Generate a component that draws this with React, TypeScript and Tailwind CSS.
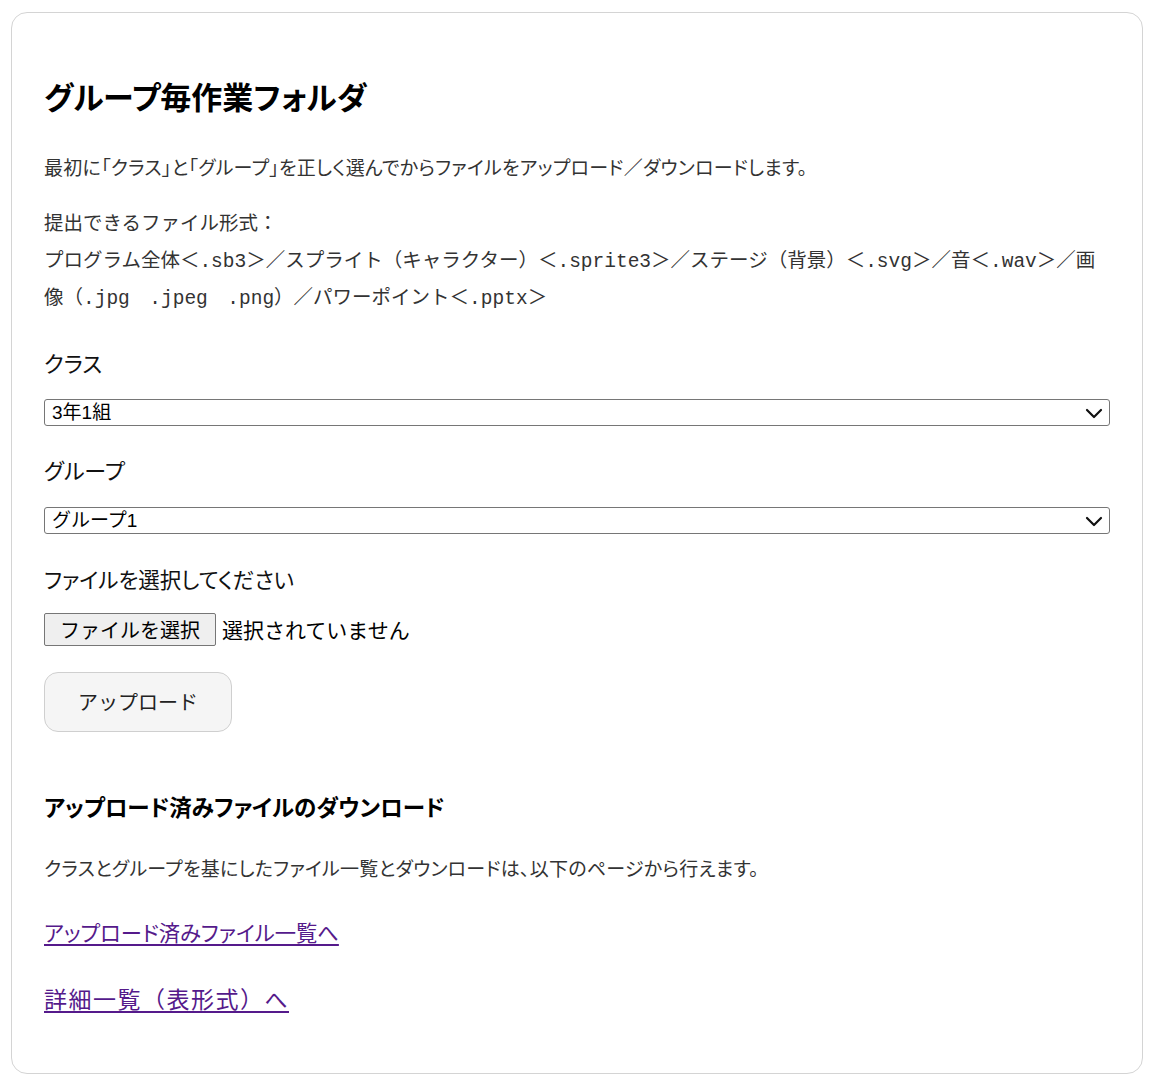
import { useState } from 'react'

const jp = "font-['Noto_Sans_CJK_JP','Noto_Sans',sans-serif]"
const mono = "font-['Liberation_Mono','Noto_Sans_CJK_JP',monospace]"

function Chevron() {
  return (
    <svg
      className="pointer-events-none absolute right-[7px] top-1/2 -translate-y-1/2"
      width="18"
      height="12"
      viewBox="0 0 18 12"
      fill="none"
    >
      <path d="M2 3l7 7 7-7" stroke="#111" strokeWidth="2.2" strokeLinecap="round" strokeLinejoin="round" />
    </svg>
  )
}

interface SelectBoxProps {
  value: string
  options: string[]
  onChange: (v: string) => void
}

function SelectBox({ value, options, onChange }: SelectBoxProps) {
  return (
    <div className="relative">
      <select
        value={value}
        onChange={(e) => onChange(e.target.value)}
        className="block h-[27px] w-full appearance-none rounded-[3px] border border-[#767676] bg-white pl-[7px] pr-8 font-['Liberation_Sans','Noto_Sans_CJK_JP',sans-serif] text-[19px] leading-[25px] text-black outline-none"
      >
        {options.map((o) => (
          <option key={o} value={o}>
            {o}
          </option>
        ))}
      </select>
      <Chevron />
    </div>
  )
}

export default function App() {
  const [klass, setKlass] = useState('3年1組')
  const [group, setGroup] = useState('グループ1')

  return (
    <div className={`min-h-screen bg-white ${jp}`}>
      <div className="ml-[11px] mt-[12px] w-[1132px] rounded-2xl border border-[#d4d4d4] bg-white px-8 pb-[60px] pt-[65px]">
        {/* タイトル */}
        <h1 className="text-[31px] font-bold leading-[36px] text-black [font-feature-settings:'palt']">
          グループ毎作業フォルダ
        </h1>

        <p className="mt-[39px] text-[19px] leading-[28px] tracking-[0.25px] text-[#333] [font-feature-settings:'palt']">
          最初に「クラス」と「グループ」を正しく選んでからファイルをアップロード／ダウンロードします。
        </p>

        <p className={`mt-[26px] text-[19.5px] leading-[37px] text-[#333] ${mono}`}>
          提出できるファイル形式：
          <br />
          プログラム全体＜.sb3＞／スプライト（キャラクター）＜.sprite3＞／ステージ（背景）＜.svg＞／音＜.wav＞／画
          <br />
          像（.jpg　.jpeg　.png）／パワーポイント＜.pptx＞
        </p>

        {/* クラス */}
        <label className="mt-[29px] block text-[22px] leading-[30px] text-[#111] [font-feature-settings:'palt']">
          クラス
        </label>
        <div className="mt-[22px]">
          <SelectBox value={klass} options={['3年1組', '3年2組', '3年3組']} onChange={setKlass} />
        </div>

        {/* グループ */}
        <label className="mt-[28px] block text-[22px] leading-[30px] text-[#111] [font-feature-settings:'palt']">
          グループ
        </label>
        <div className="mt-[23px]">
          <SelectBox
            value={group}
            options={['グループ1', 'グループ2', 'グループ3', 'グループ4']}
            onChange={setGroup}
          />
        </div>

        {/* ファイル */}
        <label className="mt-[30px] block text-[21.5px] leading-[30px] text-[#111] [font-feature-settings:'palt']">
          ファイルを選択してください
        </label>
        <div className="mt-[19px] flex items-center gap-[6px]">
          <button className="h-[33px] w-[172px] rounded-[2px] border border-[#767676] bg-[#efefef] text-[20px] leading-[31px] text-black">
            ファイルを選択
          </button>
          <span className="text-[21px] leading-[33px] text-black">選択されていません</span>
        </div>

        <button className="mt-[26px] block h-[60px] w-[188px] rounded-[14px] border border-[#cfcfcf] bg-[#f5f5f5] text-[20px] text-[#222]">
          アップロード
        </button>

        {/* ダウンロード */}
        <h2 className="mt-[58px] text-[22.5px] font-bold leading-[32px] text-black [font-feature-settings:'palt']">
          アップロード済みファイルのダウンロード
        </h2>
        <p className="mt-[32px] text-[19px] leading-[28px] tracking-[0.25px] text-[#333] [font-feature-settings:'palt']">
          クラスとグループを基にしたファイル一覧とダウンロードは、以下のページから行えます。
        </p>

        <div className="mt-[35px] text-[21.3px] leading-[30px] [font-feature-settings:'palt']">
          <a href="#" className="text-[#551a8b] underline underline-offset-[3px]">
            アップロード済みファイル一覧へ
          </a>
        </div>
        <div className="mt-[36px] text-[23px] leading-[30px] tracking-[1.5px]">
          <a href="#" className="text-[#551a8b] underline underline-offset-[3px]">
            詳細一覧（表形式）へ
          </a>
        </div>
      </div>
    </div>
  )
}
